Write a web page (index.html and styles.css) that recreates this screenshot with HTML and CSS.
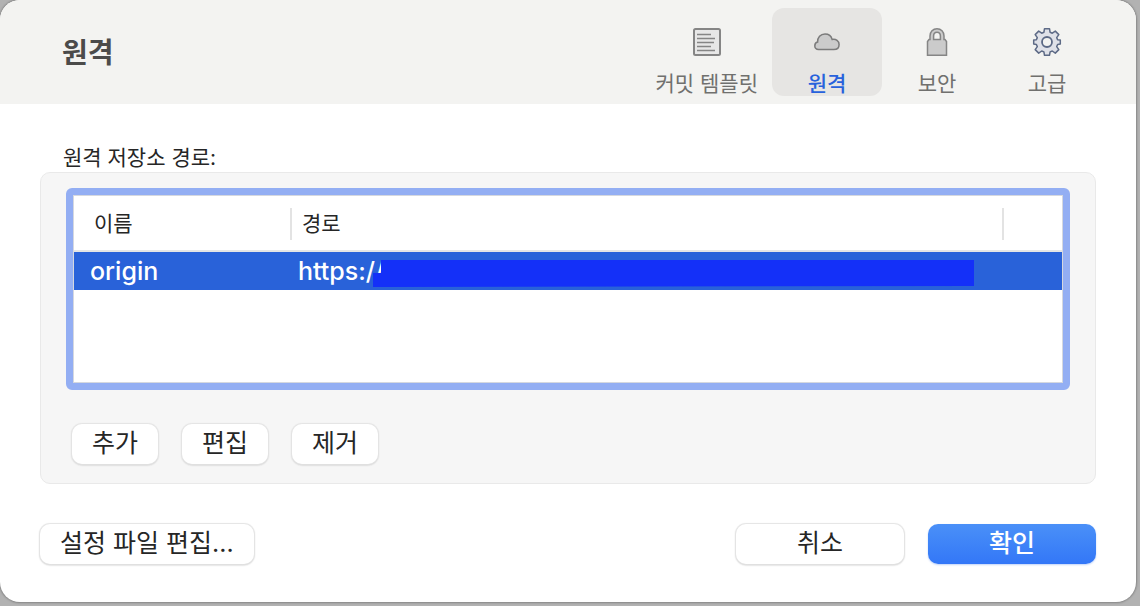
FILE: index.html
```html
<!DOCTYPE html>
<html lang="ko">
<head>
  <meta charset="UTF-8" />
  <meta name="viewport" content="width=device-width, initial-scale=1.0"/>
  <title>원격</title>
  <link rel="stylesheet" href="styles.css">
</head>
<body>
  <div class="window">
    <header class="toolbar">
      <h1>원격</h1>
      <nav class="tabs">
        <button class="tab" type="button">
          <svg width="32" height="32" viewBox="0 0 32 32" fill="none" stroke="#858585" stroke-width="2">
            <rect x="3" y="3" width="26" height="26" rx="1.5" fill="#e7e7e7"/>
            <path d="M6 8.500h14M6 12.500h18M6 16.500h17M6 20.500h14M6 24.500h18" stroke-width="1.5"/>
          </svg>
          <span>커밋 템플릿</span>
        </button>
        <button class="tab active" type="button">
          <svg width="32" height="32" viewBox="0 0 32 32">
            <path d="M7.5 23.5c-2.200 0-3.700-1.400-3.700-3.600 0-2 1.100-3.400 2.800-3.800C6.400 11.500 9.500 8 14 8c3.600 0 6.300 2 7.100 5.400 3.800-.8 7 1.500 7 5 0 3.100-2.200 5.100-5.300 5.100z" fill="#cbcbcb" stroke="#7b7b7b" stroke-width="1.5"/>
          </svg>
          <span>원격</span>
        </button>
        <button class="tab" type="button">
          <svg width="32" height="32" viewBox="0 0 32 32" fill="#cbcbcb" stroke="#858585" stroke-width="1.5">
            <path fill-rule="evenodd" d="M6.500 29.300V15.500l1.500-2h1V10C9 5.600 12 2.700 16 2.700s7 2.900 7 7.300v3.500h1l1.500 2v13.800zM12.600 13.500h6.800V10c0-2.300-1.300-3.800-3.400-3.800S12.600 7.700 12.600 10z"/>
          </svg>
          <span>보안</span>
        </button>
        <button class="tab" type="button">
          <svg width="32" height="32" viewBox="0 0 32 32" fill="#dfe1e8" stroke="#5d6a86" stroke-width="1.5" stroke-linejoin="round">
            <path d="M13.500 2.700h5l.6 3.600 2.200.9 3-2.100 3.500 3.500-2.100 3 .9 2.100 2.700.4v3.900l-2.700.5-.9 2.100 2.100 3-3.500 3.500-3-2.100-2.200.9-.6 3.400h-5l-.6-3.400-2.200-.9-3 2.100-3.500-3.500 2.100-3-.9-2.100-2.700-.5v-3.900l2.700-.4.9-2.100-2.100-3 3.500-3.500 3 2.100 2.200-.9z"/>
            <circle cx="16" cy="16" r="5" fill="#f3f3f1" stroke-width="1.8"/>
          </svg>
          <span>고급</span>
        </button>
      </nav>
    </header>

    <main class="content">
      <h2 id="remotesLabel">원격 저장소 경로:</h2>
      <section class="group">
        <div class="remotes">
          <table aria-labelledby="remotesLabel">
            <colgroup>
              <col class="col-name">
              <col>
              <col class="col-end">
            </colgroup>
            <thead>
              <tr><th>이름</th><th>경로</th><th></th></tr>
            </thead>
            <tbody>
              <tr class="selected">
                <td>origin</td>
                <td>https://<span class="redacted"></span></td>
                <td></td>
              </tr>
            </tbody>
          </table>
        </div>
        <div class="actions">
          <button class="btn" type="button">추가</button>
          <button class="btn" type="button">편집</button>
          <button class="btn" type="button">제거</button>
        </div>
      </section>
    </main>

    <footer class="footer">
      <button class="btn config" type="button">설정 파일 편집...</button>
      <button class="btn wide" type="button">취소</button>
      <button class="btn wide primary" type="button">확인</button>
    </footer>
  </div>
</body>
</html>
```
FILE: styles.css
```css
* {
  box-sizing: border-box;
}

body {
  margin: 0;
  padding: 0 4px 4px 0;
  min-height: 100vh;
  display: flex;
  background: #b2b2b2;
  font-family: Inter, "Noto Sans CJK KR", sans-serif;
  color: #262626;
}

button {
  font: inherit;
  border: none;
  margin: 0;
}

.window {
  flex: 1;
  min-width: 0;
  background: white;
  border-radius: 20px;
  overflow: hidden;
  box-shadow: 0 0 2px 1px #858585;
}

.toolbar {
  display: flex;
  justify-content: space-between;
  align-items: flex-start;
  height: 104px;
  padding: 8px 34px 0 62px;
  background: #f3f3f1;
}

h1 {
  margin: 24px 0 0;
  font-size: 28px;
  line-height: 42px;
  font-weight: bold;
  color: #4b4b4a;
}

.tabs {
  display: flex;
}

.tab {
  display: flex;
  flex-direction: column;
  align-items: center;
  gap: 10px;
  min-width: 110px;
  height: 88px;
  padding: 18px 14px 0;
  border-radius: 12px;
  background: none;
  color: #70706e;
  font-size: 21px;
  line-height: 32px;
  white-space: nowrap;
}

.tab svg {
  flex: none;
}

.tab.active {
  background: #e6e5e3;
  color: #2862dc;
  font-weight: 500;
}

.content {
  padding: 38px 40px 0;
}

h2 {
  margin: 0;
  padding: 1px 0 0 23px;
  height: 30px;
  font-size: 21px;
  line-height: 30px;
  font-weight: normal;
}

.group {
  padding: 15px 25px 19px;
  border: 1px solid #e9e9e9;
  border-radius: 10px;
  background: #f6f6f6;
}

.remotes {
  min-height: 202px;
  border: 7px solid #93aef3;
  border-radius: 6px;
  background: white;
  box-shadow: inset 0 0 0 1px #d5d8df;
  padding: 1px;
}

table {
  width: 100%;
  table-layout: fixed;
  border-collapse: separate;
  border-spacing: 0;
}

.col-name {
  width: 218px;
}

.col-end {
  width: 58px;
}

th {
  position: relative;
  height: 56px;
  padding: 2px 0 0 10px;
  border-bottom: 2px solid #e5e5e5;
  font-size: 21px;
  line-height: 30px;
  font-weight: normal;
  text-align: left;
}

th:first-child {
  padding-left: 20px;
}

/* short column dividers */
th:not(:last-child)::after {
  content: "";
  position: absolute;
  top: 12px;
  right: 0;
  width: 2px;
  height: 32px;
  background: #e3e3e3;
}

td {
  position: relative;
  height: 38px;
  padding: 0 0 0 6px;
  font-size: 25px;
  line-height: 38px;
  font-weight: 500;
  white-space: nowrap;
}

td:first-child {
  padding-left: 16px;
}

.selected {
  background: #2962d9;
  color: white;
}

.redacted {
  position: absolute;
  top: 8px;
  left: 81px;
  right: 30px;
  height: 27px;
  background: #1430f8;
  clip-path: polygon(8px 0, 100% 0, 100% 26px, 0 100%, 0 13px, 8px 13px);
}

.actions {
  display: flex;
  gap: 24px;
  padding: 34px 0 0 6px;
}

.btn {
  min-width: 86px;
  height: 40px;
  padding: 0 20px 2px;
  border-radius: 10px;
  background: white;
  box-shadow: 0 0 1px 1px #e4e4e4, 0 1px 2px #b0b0b0;
  color: #262626;
  font-size: 25px;
  line-height: 38px;
  white-space: nowrap;
}

.footer {
  display: flex;
  gap: 24px;
  padding: 40px 40px 38px;
}

.config {
  min-width: 212px;
  margin-right: auto;
}

.wide {
  width: 168px;
}

.primary {
  background: linear-gradient(#4a90f8, #3377f7);
  box-shadow: 0 1px 2px #bfd3f8;
  color: white;
  font-weight: 500;
}
```
